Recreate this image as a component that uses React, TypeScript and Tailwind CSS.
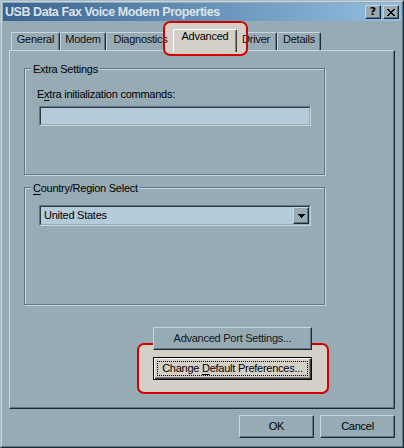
import React from "react";

function CapBtn({ children, className = "" }: { children: React.ReactNode; className?: string }) {
  return (
    <div
      className={
        "w-[16px] h-[14px] bg-[#97abb5] border border-t-[#c6d5de] border-l-[#c6d5de] border-r-[#1e2a33] border-b-[#1e2a33] shadow-[inset_-1px_-1px_0_#5f7786] flex items-center justify-center " +
        className
      }
    >
      {children}
    </div>
  );
}

function Tab({ label, w }: { label: string; w: string }) {
  return (
    <div
      className={
        "h-[18px] flex justify-center leading-[13px] border-l border-t border-r border-l-[#c6d5de] border-t-[#c6d5de] border-r-[#1e2a33] shadow-[inset_-1px_0_0_#5f7786] rounded-tl-[2px] rounded-tr-[2px] " +
        w
      }
    >
      {label}
    </div>
  );
}

function Btn({ children, className = "" }: { children: React.ReactNode; className?: string }) {
  return (
    <div
      className={
        "relative h-[23px] bg-[#97abb5] border border-t-[#c6d5de] border-l-[#c6d5de] border-r-[#1e2a33] border-b-[#1e2a33] shadow-[inset_-1px_-1px_0_#5f7786] flex items-center justify-center leading-[13px] " +
        className
      }
    >
      {children}
    </div>
  );
}

export default function App() {
  return (
    <div className="relative w-[404px] h-[448px] bg-[#97abb5] border border-t-[#a9bcc6] border-l-[#a9bcc6] border-r-[#1e2a33] border-b-[#1e2a33] overflow-hidden text-[11px] text-black tracking-[-0.25px] font-['Liberation_Sans',Arial,sans-serif]">
      {/* annotation fills */}
      <div className="absolute left-[162px] top-[20px] w-[85px] h-[35px] rounded-[7px] bg-[#d4d0c8] z-0" />
      <div className="absolute left-[136px] top-[342px] w-[192px] h-[51px] rounded-[7px] bg-[#d4d0c8] border-2 border-[#d40000] z-0" />

      <div className="relative z-10 w-full h-full border border-t-[#c6d5de] border-l-[#c6d5de] border-r-[#5f7786] border-b-[#5f7786] p-px flex flex-col">
        {/* title bar */}
        <div className="h-[18px] flex items-center pl-[2px] pr-[2px] bg-gradient-to-r from-[#3a6590] to-[#93bfe2]">
          <span className="flex-1 font-bold text-[12.5px] leading-[14px] text-[#dde4ea] tracking-[-0.45px]">
            USB Data Fax Voice Modem Properties
          </span>
          <CapBtn>
            <span className="font-bold text-[11px] leading-[11px] tracking-normal font-['DejaVu_Sans',sans-serif] -mt-[1px]">?</span>
          </CapBtn>
          <CapBtn className="ml-[2px]">
            <svg width="8" height="7" viewBox="0 0 8 7" shapeRendering="crispEdges" className="-ml-[1px]">
              <g fill="#000">
                <rect x="0" y="0" width="2" height="1" />
                <rect x="6" y="0" width="2" height="1" />
                <rect x="1" y="1" width="2" height="1" />
                <rect x="5" y="1" width="2" height="1" />
                <rect x="2" y="2" width="4" height="1" />
                <rect x="3" y="3" width="2" height="1" />
                <rect x="2" y="4" width="4" height="1" />
                <rect x="1" y="5" width="2" height="1" />
                <rect x="5" y="5" width="2" height="1" />
                <rect x="0" y="6" width="2" height="1" />
                <rect x="6" y="6" width="2" height="1" />
              </g>
            </svg>
          </CapBtn>
        </div>

        {/* body */}
        <div className="flex flex-col px-[6px] pt-[8px]">
          {/* tabs */}
          <div className="h-[21px] flex items-end pl-[2px] text-[#101010]">
            <Tab label="General" w="w-[49px]" />
            <Tab label="Modem" w="w-[46px]" />
            <Tab label="Diagnostics" w="w-[69px]" />
            <div className="relative z-10 -mx-[2px] -mb-[2px] w-[64px] h-[23px] flex justify-center leading-[13px] bg-[#d4d0c8] border-l border-t border-r border-l-white border-t-white border-r-[#404040] shadow-[inset_-1px_0_0_#808080] rounded-tl-[2px] rounded-tr-[2px] text-black">
              Advanced
            </div>
            <Tab label="Driver" w="w-[42px]" />
            <Tab label="Details" w="w-[44px]" />
          </div>

          {/* panel */}
          <div className="h-[359px] border border-t-[#c6d5de] border-l-[#c6d5de] border-r-[#1e2a33] border-b-[#1e2a33] shadow-[inset_-1px_-1px_0_#5f7786] pl-[14px] pt-[17px] flex flex-col">
            {/* Extra settings */}
            <div className="relative w-[301px] h-[107px] border border-[#5f7786] shadow-[1px_1px_0_#c6d5de,inset_1px_1px_0_#c6d5de] pt-[19px] pl-[12px] flex flex-col">
              <div className="absolute -top-[6px] left-[6px] px-[2px] bg-[#97abb5] leading-[13px]">Extra Settings</div>
              <div className="leading-[13px]">
                E<span className="underline underline-offset-[2px]">x</span>tra initialization commands:
              </div>
              <div className="mt-[5px] ml-[2px] w-[272px] h-[20px] border border-t-[#5f7786] border-l-[#5f7786] border-r-[#c6d5de] border-b-[#c6d5de]">
                <div className="w-full h-full border border-t-[#2a3a46] border-l-[#2a3a46] border-r-[#97abb5] border-b-[#97abb5] bg-[#b6cbd9]" />
              </div>
            </div>

            {/* Country/Region */}
            <div className="relative mt-[12px] w-[301px] h-[118px] border border-[#5f7786] shadow-[1px_1px_0_#c6d5de,inset_1px_1px_0_#c6d5de] pt-[17px] pl-[14px] flex flex-col">
              <div className="absolute -top-[6px] left-[6px] px-[2px] bg-[#97abb5] leading-[13px]">
                <span className="underline underline-offset-[2px]">C</span>ountry/Region Select
              </div>
              <div className="w-[272px] h-[21px] border border-t-[#5f7786] border-l-[#5f7786] border-r-[#c6d5de] border-b-[#c6d5de]">
                <div className="w-full h-full flex border border-t-[#2a3a46] border-l-[#2a3a46] border-r-[#97abb5] border-b-[#97abb5] bg-[#b6cbd9]">
                  <div className="flex-1 pl-[3px] flex items-center leading-[13px]">United States</div>
                  <div className="w-[16px] h-full bg-[#97abb5] border border-t-[#c6d5de] border-l-[#c6d5de] border-r-[#1e2a33] border-b-[#1e2a33] shadow-[inset_-1px_-1px_0_#5f7786] flex items-center justify-center">
                    <svg width="7" height="4" viewBox="0 0 7 4" shapeRendering="crispEdges">
                      <g fill="#000">
                        <rect x="0" y="0" width="7" height="1" />
                        <rect x="1" y="1" width="5" height="1" />
                        <rect x="2" y="2" width="3" height="1" />
                        <rect x="3" y="3" width="1" height="1" />
                      </g>
                    </svg>
                  </div>
                </div>
              </div>
            </div>

            <Btn className="mt-[22px] ml-[129px] w-[159px] text-[#101820]">Advanced Port Settings...</Btn>

            <div className="relative mt-[7px] ml-[129px] w-[159px] h-[23px] border border-black bg-[#d4d0c8] shadow-[inset_1px_1px_0_#ffffff,inset_-1px_-1px_0_#404040,inset_-2px_-2px_0_#808080] flex items-center justify-center leading-[13px]">
              <div className="absolute inset-[3px] border border-dotted border-black" />
              <span>
                Change <span className="underline underline-offset-[2px]">D</span>efault Preferences...
              </span>
            </div>
          </div>

          {/* footer */}
          <div className="mt-[6px] flex justify-end gap-[6px]">
            <Btn className="w-[75px]">OK</Btn>
            <Btn className="w-[75px]">Cancel</Btn>
          </div>
        </div>
      </div>

      {/* annotation border on top */}
      <div className="absolute left-[162px] top-[20px] w-[85px] h-[35px] rounded-[7px] border-2 border-[#d40000] z-20 pointer-events-none" />
    </div>
  );
}
